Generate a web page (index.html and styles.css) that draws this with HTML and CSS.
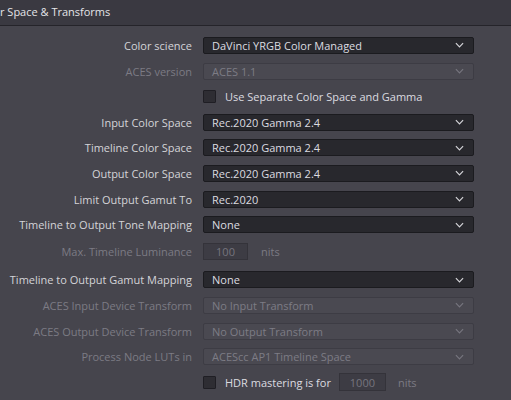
FILE: index.html
```html
<!DOCTYPE html>
<html>
<head>
<meta charset="utf-8">
<link rel="stylesheet" href="styles.css">
</head>
<body>
<div class="panel">
  <div class="header"><span class="title">r Space &amp; Transforms</span></div>
  <div class="form">
    <div class="row">
      <div class="label">Color science</div>
      <div class="select"><span>DaVinci YRGB Color Managed</span><svg class="chev" viewBox="0 0 10 6"><path d="M1 1 L5 5 L9 1"/></svg></div>
    </div>
    <div class="row disabled">
      <div class="label">ACES version</div>
      <div class="select"><span>ACES 1.1</span><svg class="chev" viewBox="0 0 10 6"><path d="M1 1 L5 5 L9 1"/></svg></div>
    </div>
    <div class="row">
      <div class="label"></div>
      <div class="check"><span class="box"></span><span class="check-text">Use Separate Color Space and Gamma</span></div>
    </div>
    <div class="row">
      <div class="label">Input Color Space</div>
      <div class="select"><span>Rec.2020 Gamma 2.4</span><svg class="chev" viewBox="0 0 10 6"><path d="M1 1 L5 5 L9 1"/></svg></div>
    </div>
    <div class="row">
      <div class="label">Timeline Color Space</div>
      <div class="select"><span>Rec.2020 Gamma 2.4</span><svg class="chev" viewBox="0 0 10 6"><path d="M1 1 L5 5 L9 1"/></svg></div>
    </div>
    <div class="row">
      <div class="label">Output Color Space</div>
      <div class="select"><span>Rec.2020 Gamma 2.4</span><svg class="chev" viewBox="0 0 10 6"><path d="M1 1 L5 5 L9 1"/></svg></div>
    </div>
    <div class="row">
      <div class="label">Limit Output Gamut To</div>
      <div class="select"><span>Rec.2020</span><svg class="chev" viewBox="0 0 10 6"><path d="M1 1 L5 5 L9 1"/></svg></div>
    </div>
    <div class="row">
      <div class="label">Timeline to Output Tone Mapping</div>
      <div class="select"><span>None</span><svg class="chev" viewBox="0 0 10 6"><path d="M1 1 L5 5 L9 1"/></svg></div>
    </div>
    <div class="row disabled lum">
      <div class="label">Max. Timeline Luminance</div>
      <div class="numrow"><span class="num">100</span><span class="unit">nits</span></div>
    </div>
    <div class="row gamut">
      <div class="label">Timeline to Output Gamut Mapping</div>
      <div class="select"><span>None</span><svg class="chev" viewBox="0 0 10 6"><path d="M1 1 L5 5 L9 1"/></svg></div>
    </div>
    <div class="row disabled">
      <div class="label">ACES Input Device Transform</div>
      <div class="select"><span>No Input Transform</span><svg class="chev" viewBox="0 0 10 6"><path d="M1 1 L5 5 L9 1"/></svg></div>
    </div>
    <div class="row disabled">
      <div class="label">ACES Output Device Transform</div>
      <div class="select"><span>No Output Transform</span><svg class="chev" viewBox="0 0 10 6"><path d="M1 1 L5 5 L9 1"/></svg></div>
    </div>
    <div class="row disabled">
      <div class="label">Process Node LUTs in</div>
      <div class="select"><span>ACEScc AP1 Timeline Space</span><svg class="chev" viewBox="0 0 10 6"><path d="M1 1 L5 5 L9 1"/></svg></div>
    </div>
    <div class="row">
      <div class="label"></div>
      <div class="check"><span class="box"></span><span class="check-text">HDR mastering is for</span><span class="num hdr">1000</span><span class="unit dim">nits</span></div>
    </div>
  </div>
</div>
</body>
</html>
```

FILE: styles.css
```css
html, body {
  margin: 0;
  padding: 0;
  background: #46454d;
  width: 511px;
  height: 400px;
  overflow: hidden;
}

.panel {
  font-family: "Open Sans", "Lato", sans-serif;
  font-size: 11px;
  color: #d4d4d8;
}

.header {
  height: 25px;
  background: #3a3941;
  border-bottom: 1px solid #25242a;
  display: flex;
  align-items: center;
  overflow: hidden;
}

.title {
  font-size: 11px;
  color: #e4e4e8;
  white-space: nowrap;
  padding-bottom: 2px;
}

.form {
  padding-top: 6.7px;
  display: flex;
  flex-direction: column;
}

.row {
  height: 25.6px;
  display: flex;
  align-items: center;
}

.row.lum {
  margin-top: 1px;
}

.row.gamut {
  margin-top: 3px;
}

.label {
  width: 192px;
  flex: none;
  text-align: right;
  white-space: nowrap;
  margin-right: 11px;
}

.select {
  width: 271px;
  height: 17px;
  box-sizing: border-box;
  background: #28282d;
  border: 1px solid #1b1b1f;
  border-radius: 2px;
  display: flex;
  align-items: center;
  justify-content: space-between;
  padding: 0 9px 0 8px;
  color: #dcdce0;
}

.chev {
  width: 9px;
  height: 6px;
  fill: none;
  stroke: #d4d4d8;
  stroke-width: 1.3;
}

.disabled .label {
  color: #7c7b84;
}

.disabled .select {
  background: #4a4951;
  border-color: #3d3c44;
  color: #7d7c85;
}

.disabled .chev {
  stroke: #76757e;
}

.check {
  display: flex;
  align-items: center;
}

.box {
  width: 11px;
  height: 11px;
  background: #2e2d33;
  border: 1px solid #1f1e24;
  border-radius: 1px;
  margin-right: 9px;
}

.check-text {
  color: #dcdce0;
}

.numrow {
  display: flex;
  align-items: center;
}

.num {
  width: 45px;
  height: 17px;
  box-sizing: border-box;
  background: #3d3c44;
  border: 1px solid #34333a;
  display: flex;
  align-items: center;
  justify-content: center;
  color: #76757e;
}

.unit {
  margin-left: 13px;
  color: #7c7b84;
}

.hdr {
  width: 47px;
  height: 18px;
  margin-left: 8px;
}

.unit.dim {
  margin-left: 12px;
}
```
